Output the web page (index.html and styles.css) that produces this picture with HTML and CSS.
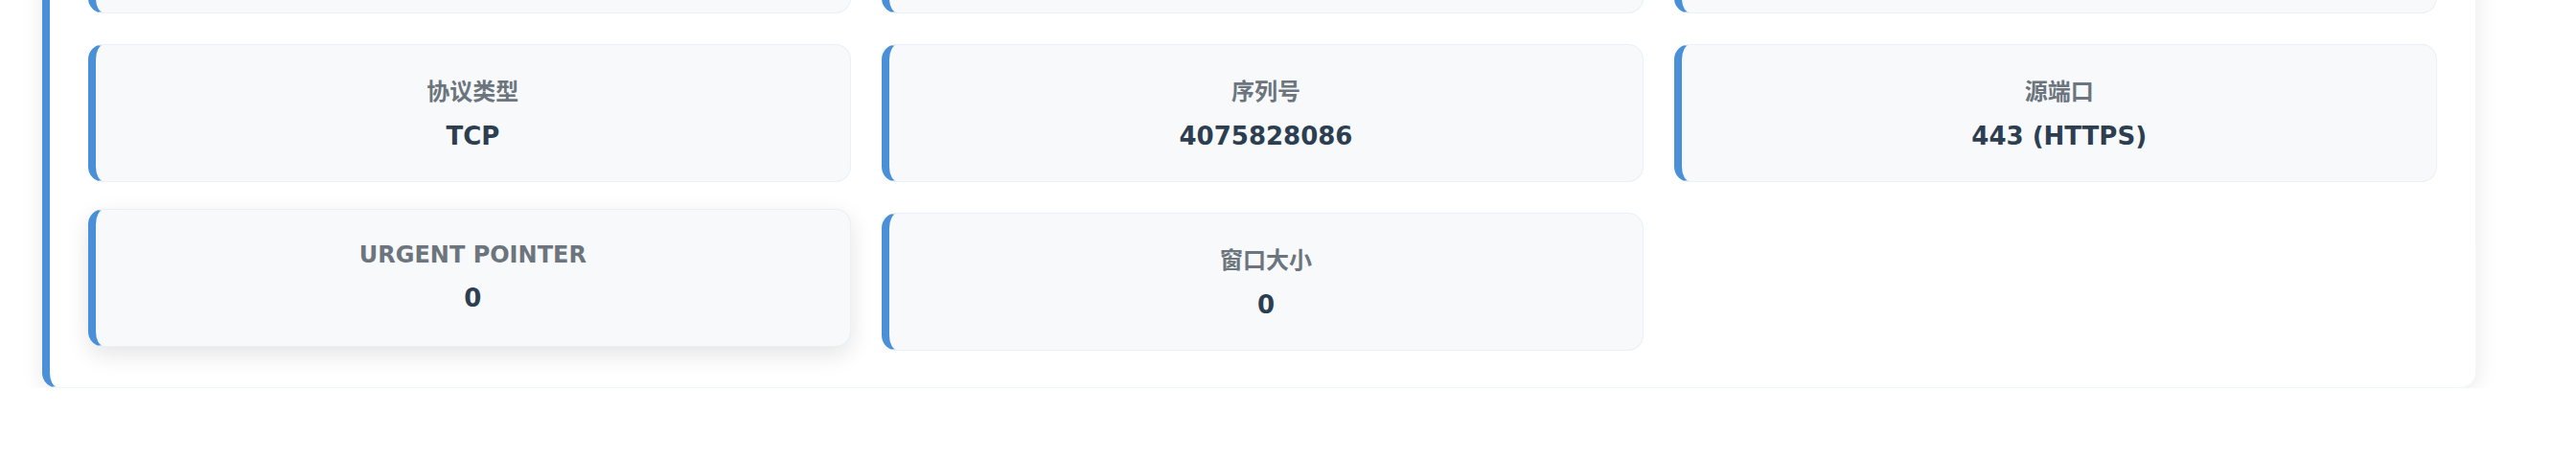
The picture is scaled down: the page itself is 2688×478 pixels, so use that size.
FILE: index.html
```html
<!DOCTYPE html>
<html lang="zh-CN">
<head>
<meta charset="utf-8">
<title>TCP 数据包详情</title>
<link rel="stylesheet" href="styles.css">
</head>
<body>
<div class="page">
  <section class="panel">
    <div class="grid">
      <div class="item"></div>
      <div class="item"></div>
      <div class="item"></div>

      <div class="item"><div class="label">协议类型</div><div class="value">TCP</div></div>
      <div class="item"><div class="label">序列号</div><div class="value">4075828086</div></div>
      <div class="item"><div class="label">源端口</div><div class="value">443 (HTTPS)</div></div>

      <div class="item is-hover"><div class="label">URGENT POINTER</div><div class="value">0</div></div>
      <div class="item"><div class="label">窗口大小</div><div class="value">0</div></div>
    </div>
  </section>
</div>
</body>
</html>
```

FILE: styles.css
```css
* {
  box-sizing: border-box;
}

html, body {
  margin: 0;
  padding: 0;
  background: #ffffff;
}

body {
  font-family: "DejaVu Sans", "Noto Sans CJK SC", sans-serif;
  overflow: hidden;
}

.page {
  width: 2584px;
  padding-left: 44px;
  margin-top: -171px;
}

.panel {
  background: #ffffff;
  border: 1px solid rgba(74, 144, 217, 0.08);
  border-left: 8px solid #4a90d9;
  border-radius: 16px;
  padding: 40px 40px 38px 40px;
  box-shadow: 0 4px 24px rgba(0, 0, 0, 0.09);
}

.grid {
  display: grid;
  grid-template-columns: repeat(3, 1fr);
  gap: 32px;
}

.item {
  height: 144px;
  background: #f7f9fb;
  border: 1px solid rgba(74, 144, 217, 0.08);
  border-left: 8px solid #4a90d9;
  border-radius: 16px;
  padding: 29px 20px 32px;
  display: flex;
  flex-direction: column;
  justify-content: center;
  align-items: center;
  text-align: center;
}

.item.is-hover {
  transform: translateY(-4px);
  box-shadow: 0 8px 24px rgba(0, 0, 0, 0.11);
}

.label {
  font-size: 24px;
  font-weight: 700;
  color: #6c757d;
  margin-bottom: 16px;
}

.value {
  font-size: 26px;
  font-weight: 700;
  color: #2c3e50;
}
```
